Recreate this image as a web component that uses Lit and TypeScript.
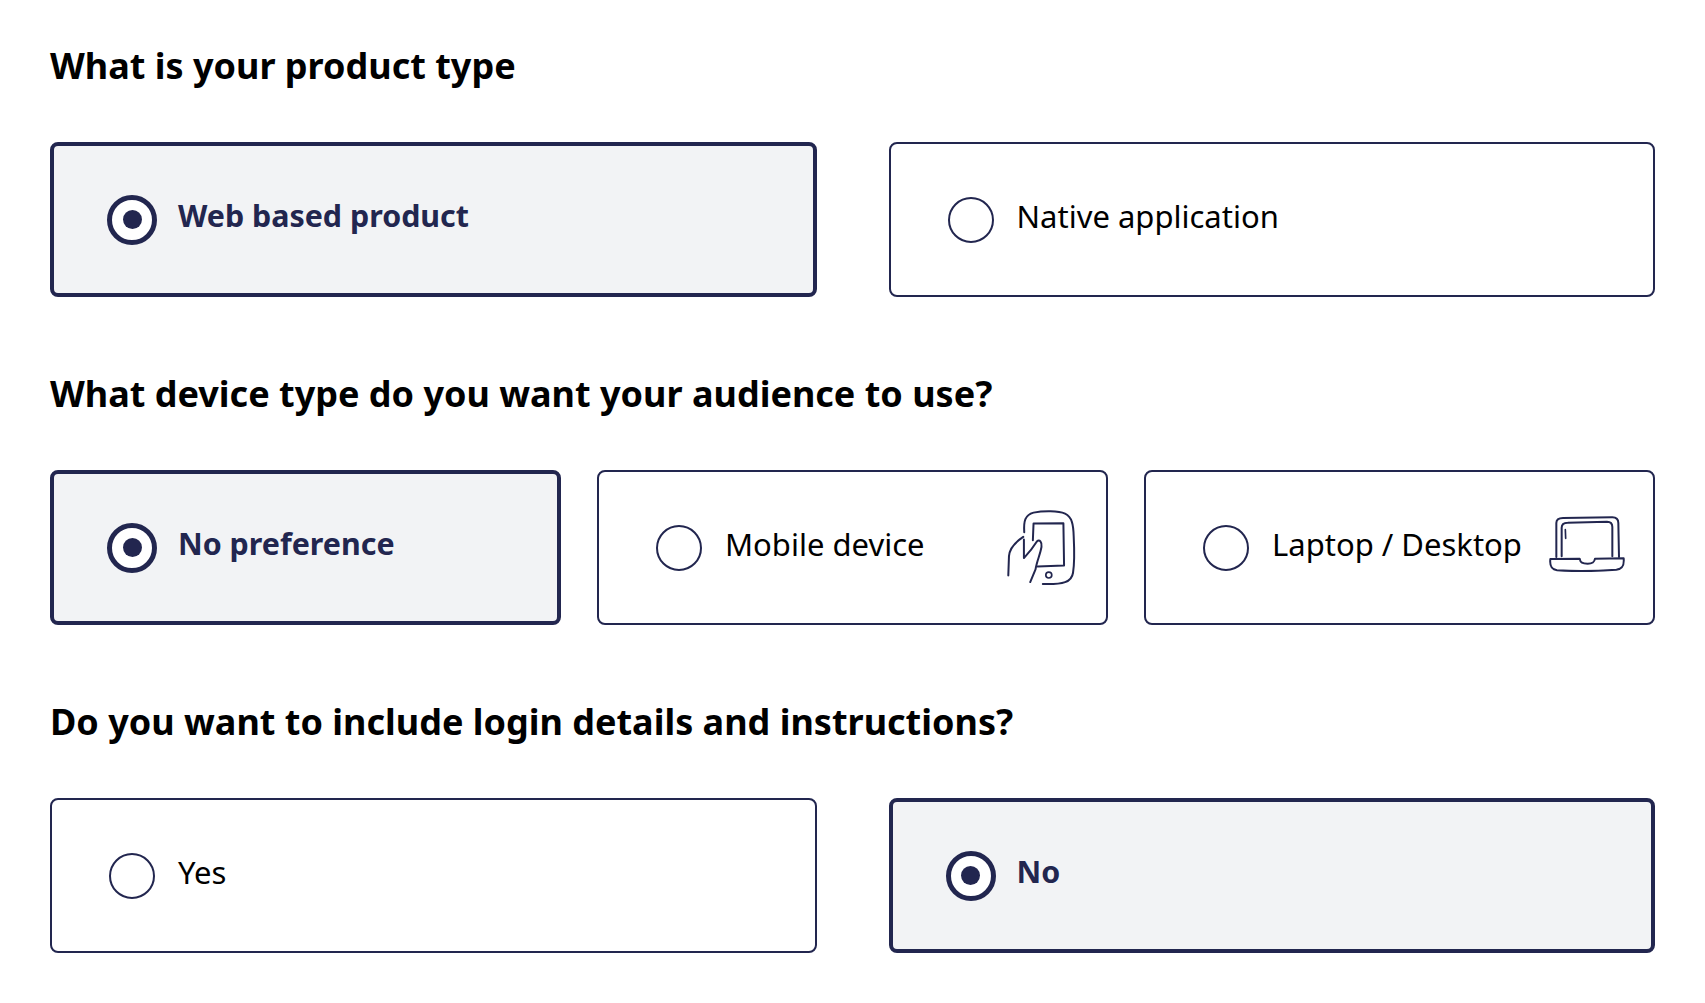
import { LitElement, html, css, svg } from 'lit';
import { customElement } from 'lit/decorators.js';

const phoneIcon = html`<svg class="icon phone" width="72" height="78" viewBox="75 55 215 235" fill="none" stroke="#22264f" stroke-width="6" stroke-linecap="round" stroke-linejoin="round">
  ${svg`
    <path d="M132 128 C130 95 134 76 160 69 C190 63 235 63 255 72 C276 82 280 105 281 140 C283 180 283 225 279 250 C275 278 250 286 188 284"/>
    <path d="M158 152 L160 102 L250 101 L252 228 L172 231"/>
    <circle cx="206" cy="257" r="9" stroke-width="5"/>
    <path d="M129 142 C105 158 88 175 86 200 L84 258"/>
    <path d="M131 150 L131 206 C146 190 160 172 170 156 C178 148 186 158 184 172 C180 196 170 214 166 240 L150 278"/>
  `}
</svg>`;

const laptopIcon = html`<svg class="icon laptop" width="76" height="56" viewBox="60 63 228 168" fill="none" stroke="#22264f" stroke-width="6" stroke-linecap="round" stroke-linejoin="round">
  ${svg`
    <path d="M82 186 L82 84 C82 72 90 69 102 69 L250 67 C262 67 268 72 268 84 L270 186"/>
    <path d="M98 184 L98 98 C98 86 106 83 116 83 L234 80 C246 80 250 86 250 96 L250 184"/>
    <path d="M109 104 L110 130" stroke-width="5"/>
    <path d="M64 192 L152 191 C154 203 160 206 176 206 C190 206 196 203 198 191 L284 190 C286 212 280 222 262 224 C200 229 130 229 84 226 C66 224 62 210 64 192 Z"/>
  `}
</svg>`;

@customElement('app-root')
export class AppRoot extends LitElement {
  static styles = css`
    :host {
      display: block;
      padding: 36px 50px 0;
      font-family: "Noto Sans", "Open Sans", sans-serif;
      color: #000;
      background: #fff;
    }

    .section {
      margin-bottom: 67px;
    }

    h2 {
      margin: 0 0 46px;
      font-size: 36px;
      font-weight: 700;
      line-height: 60px;
      height: 60px;
    }

    .row {
      display: grid;
      gap: 72px;
      grid-template-columns: 1fr 1fr;
    }

    .row.three {
      gap: 36px;
      grid-template-columns: 1fr 1fr 1fr;
    }

    .card {
      display: flex;
      align-items: center;
      box-sizing: border-box;
      height: 155px;
      padding: 0 28px 0 57px;
      border: 2px solid #22264f;
      border-radius: 8px;
      background: #fff;
      font-size: 31px;
    }

    .card.on {
      border-width: 4px;
      padding-left: 55px;
      background: #f2f3f5;
      color: #22264f;
      font-size: 30.4px;
      font-weight: 700;
    }

    .radio {
      flex: none;
      box-sizing: border-box;
      width: 46px;
      height: 46px;
      margin-right: 23px;
      border: 2px solid #22264f;
      border-radius: 50%;
      background: #fff;
    }

    .on .radio {
      display: flex;
      align-items: center;
      justify-content: center;
      width: 50px;
      height: 50px;
      margin-left: -2px;
      margin-right: 21px;
      border-width: 5px;
    }

    .on .radio::after {
      content: "";
      width: 19px;
      height: 19px;
      border-radius: 50%;
      background: #22264f;
    }

    .label {
      flex: 1;
      line-height: 42px;
      padding-bottom: 8px;
      white-space: nowrap;
    }

    .icon {
      flex: none;
    }

    .phone {
      margin: 0 1px 2px 0;
    }

    .laptop {
      margin-bottom: 8px;
    }
  `;

  card(label: string, on = false, icon: unknown = null) {
    return html`
      <div class="card ${on ? 'on' : ''}">
        <span class="radio"></span>
        <span class="label">${label}</span>
        ${icon}
      </div>
    `;
  }

  render() {
    return html`
      <div class="section">
        <h2>What is your product type</h2>
        <div class="row">
          ${this.card('Web based product', true)}
          ${this.card('Native application')}
        </div>
      </div>
      <div class="section">
        <h2>What device type do you want your audience to use?</h2>
        <div class="row three">
          ${this.card('No preference', true)}
          ${this.card('Mobile device', false, phoneIcon)}
          ${this.card('Laptop / Desktop', false, laptopIcon)}
        </div>
      </div>
      <div class="section">
        <h2>Do you want to include login details and instructions?</h2>
        <div class="row">
          ${this.card('Yes')}
          ${this.card('No', true)}
        </div>
      </div>
    `;
  }
}
